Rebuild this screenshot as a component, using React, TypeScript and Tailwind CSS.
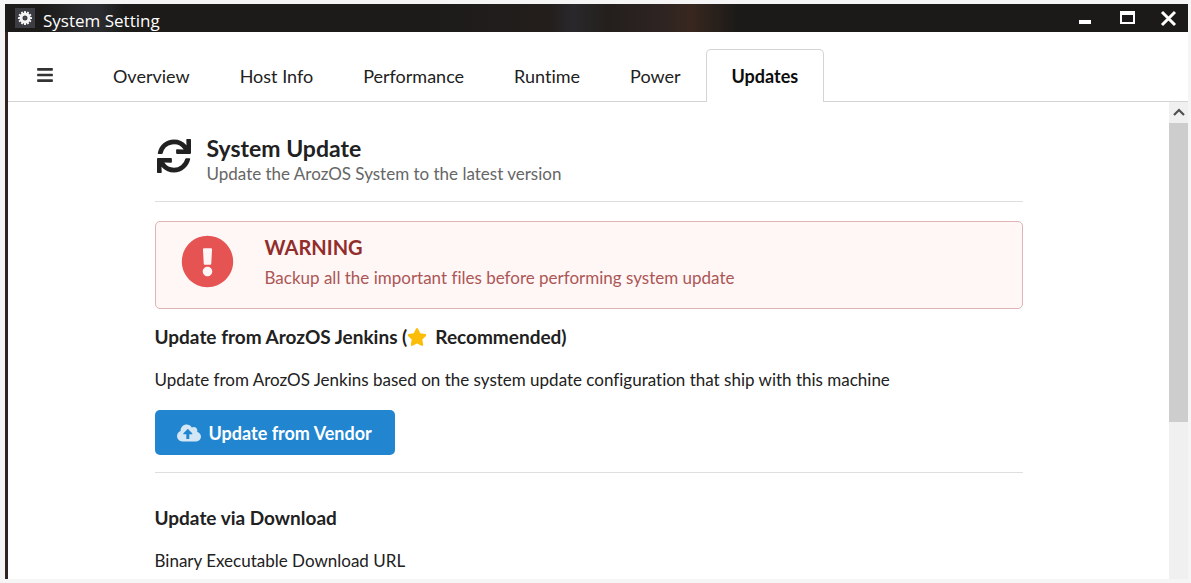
import React from "react";
import {
  FaBars,
  FaCloudUploadAlt,
  FaExclamationCircle,
  FaStar,
  FaSync,
} from "react-icons/fa";

const Tabs = [
  { title: "Overview", active: false },
  { title: "Host Info", active: false },
  { title: "Performance", active: false },
  { title: "Runtime", active: false },
  { title: "Power", active: false },
  { title: "Updates", active: true },
];

const teeth = [0, 30, 60, 90, 120, 150, 180, 210, 240, 270, 300, 330];

const GearIcon = () => (
  <svg viewBox="0 0 20 20" className="h-5 w-5" aria-hidden="true">
    <rect width="20" height="20" fill="#3b3d43" />
    <g fill="#f4f4f4">
      {teeth.map((angle) => (
        <rect
          key={angle}
          x="9"
          y="3"
          width="2"
          height="4"
          rx="0.5"
          transform={`rotate(${angle} 10 10)`}
        />
      ))}
    </g>
    <circle cx="10" cy="10" r="4" fill="none" stroke="#f4f4f4" strokeWidth="3" />
    <circle cx="10" cy="10" r="1" fill="#55565b" />
  </svg>
);

const TitleBar = () => {
  return (
    <header className="flex h-7 items-center bg-[linear-gradient(90deg,#1c1b1a_0%,#1c1b1a_3%,#2b2c30_7%,#2b2c30_8%,#1c1b1a_10%,#1c1b1a_36%,#231e1c_46%,#2a282c_48%,#241f1c_51%,#2c2322_55%,#38271f_58%,#1b1a18_62%,#1b1a18_100%)] text-white">
      <div className="flex grow items-center gap-2 pl-[10px]">
        <GearIcon />
        <h1 className="pt-[6px] font-['Open_Sans',sans-serif] text-[17px] leading-6">
          System Setting
        </h1>
      </div>
      <div className="flex items-center gap-6 pr-[10px]">
        <button aria-label="Minimize">
          <svg viewBox="0 0 18 18" className="h-[18px] w-[18px]">
            <path d="M3 11h12v4H3z" fill="#fff" />
          </svg>
        </button>
        <button aria-label="Maximize">
          <svg viewBox="0 0 18 18" className="h-[18px] w-[18px]">
            <path d="M2 2h15v13H2zM4 6v7h11V6z" fill="#fff" fillRule="evenodd" />
          </svg>
        </button>
        <button aria-label="Close">
          <svg viewBox="0 0 18 18" className="h-[18px] w-[18px]">
            <path d="M2 3l13 13M15 3L2 16" stroke="#fff" strokeWidth="3" />
          </svg>
        </button>
      </div>
    </header>
  );
};

const TabMenu = () => {
  return (
    <nav className="flex items-end border-b border-[#d4d4d5] pt-[17px] text-lg leading-6">
      <button aria-label="Menu" className="flex h-[52px] w-20 items-center pl-7">
        <FaBars size={18} className="text-[#333333]" />
      </button>
      {Tabs.map((tab) => {
        return (
          <a
            href="#"
            key={tab.title}
            className={
              tab.active
                ? "-mb-px h-[53px] rounded-t-[5px] border border-b-0 border-[#d4d4d5] bg-white px-[25px] pt-[14px] font-bold text-[#0d0d0d]"
                : "h-[52px] px-[25px] pt-[15px]"
            }
          >
            {tab.title}
          </a>
        );
      })}
    </nav>
  );
};

const ScrollBar = () => {
  return (
    <div className="w-[19px] shrink-0 bg-[#f0f0f0]" aria-hidden="true">
      <div className="flex h-[21px] items-center justify-center">
        <svg viewBox="0 0 12 10" className="h-[10px] w-3">
          <path d="M1 7L6 2l5 5" fill="none" stroke="#505050" strokeWidth="2.2" />
        </svg>
      </div>
      <div className="h-[299px] bg-[#cdcdcd]" />
    </div>
  );
};

const App = () => {
  return (
    <div className="flex min-h-screen flex-col bg-[#f5f5f5] pt-1 pr-[3px] pb-1 pl-[5px] font-[Lato,sans-serif] text-[17px] leading-6 text-[#212121] [font-variant-ligatures:none]">
      <TitleBar />
      <div className="flex grow flex-col border-l-3 border-[#33221f] bg-white">
        <TabMenu />
        <div className="flex grow">
          <main className="grow px-6">
            <div className="mx-auto max-w-[868px]">
              <div className="flex items-start gap-4 border-b border-[#dedede] pt-8 pb-[15px]">
                <FaSync size={34} className="mt-[5px] ml-[2px] shrink-0" />
                <div>
                  <h2 className="text-[23px] leading-7 font-bold">System Update</h2>
                  <p className="text-[#666666]">
                    Update the ArozOS System to the latest version
                  </p>
                </div>
              </div>

              <div
                role="alert"
                className="mt-[19px] flex items-start rounded-[5px] border border-[#e0b4b4] bg-[#fff6f6] pt-[13px] pr-6 pb-[18px] pl-[25px]"
              >
                <FaExclamationCircle
                  size={53}
                  className="mr-[31px] shrink-0 text-[#e55353]"
                />
                <div>
                  <h3 className="text-xl leading-6 font-bold text-[#912d2b]">
                    WARNING
                  </h3>
                  <p className="pt-[7px] text-[#ab5755]">
                    Backup all the important files before performing system update
                  </p>
                </div>
              </div>

              <h3 className="mt-4 flex items-center text-[19px] font-bold">
                Update from ArozOS Jenkins (
                <FaStar size={20} className="mr-2 text-[#fbbd08]" />
                Recommended)
              </h3>
              <p className="mt-[19px]">
                Update from ArozOS Jenkins based on the system update configuration
                that ship with this machine
              </p>
              <button className="mt-[18px] flex h-[45px] items-center gap-2 rounded-[5px] bg-[#2185d0] pr-[23px] pl-[22px] text-lg leading-6 font-bold text-white">
                <FaCloudUploadAlt size={24} className="opacity-80" />
                Update from Vendor
              </button>

              <hr className="mt-[17px] border-[#dedede]" />

              <h3 className="mt-[33px] text-[19px] font-bold">Update via Download</h3>
              <p className="mt-[19px]">Binary Executable Download URL</p>
            </div>
          </main>
          <ScrollBar />
        </div>
      </div>
    </div>
  );
};

export default App;
